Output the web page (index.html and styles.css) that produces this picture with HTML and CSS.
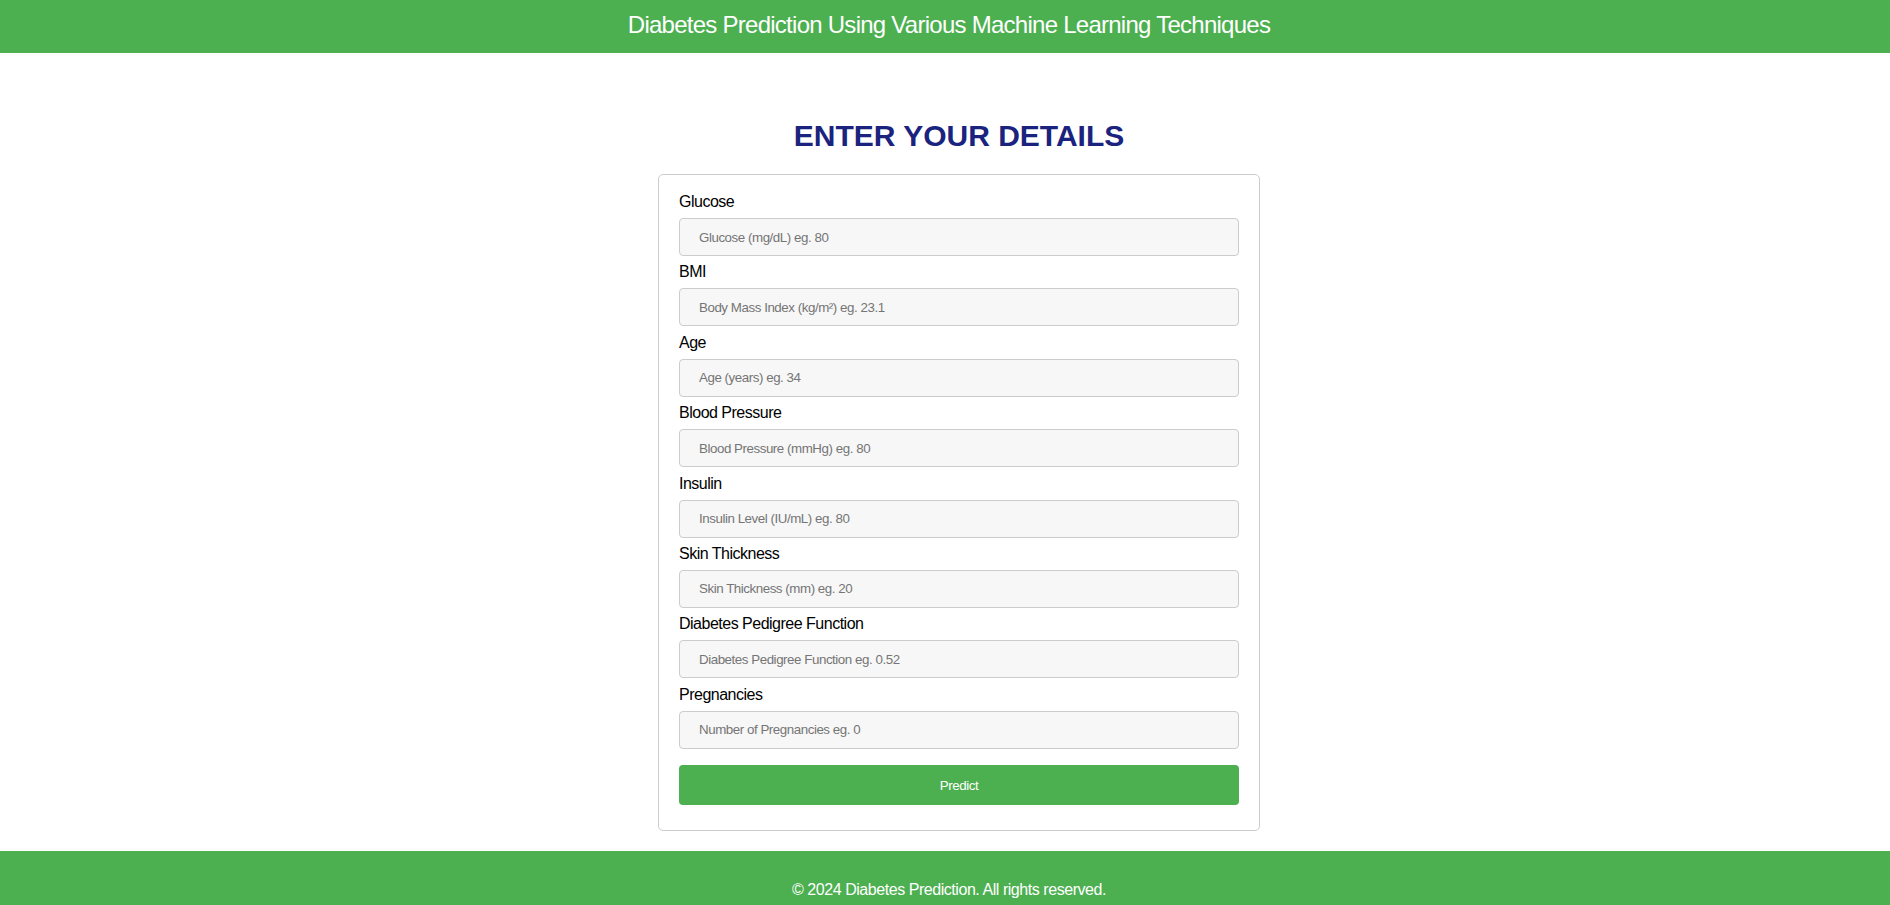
FILE: index.html
```html
<!DOCTYPE html>
<html lang="en">
<head>
<meta charset="utf-8">
<title>Diabetes Prediction</title>
<link rel="stylesheet" href="styles.css">
</head>
<body>
<header class="site-header">
  <h1 class="site-title">Diabetes Prediction Using Various Machine Learning Techniques</h1>
</header>
<main class="main">
  <h2 class="form-title">ENTER YOUR DETAILS</h2>
  <form class="card">
    <div class="field">
      <label for="glucose">Glucose</label>
      <input id="glucose" type="text" placeholder="Glucose (mg/dL) eg. 80">
    </div>
    <div class="field">
      <label for="bmi">BMI</label>
      <input id="bmi" type="text" placeholder="Body Mass Index (kg/m²) eg. 23.1">
    </div>
    <div class="field">
      <label for="age">Age</label>
      <input id="age" type="text" placeholder="Age (years) eg. 34">
    </div>
    <div class="field">
      <label for="bp">Blood Pressure</label>
      <input id="bp" type="text" placeholder="Blood Pressure (mmHg) eg. 80">
    </div>
    <div class="field">
      <label for="insulin">Insulin</label>
      <input id="insulin" type="text" placeholder="Insulin Level (IU/mL) eg. 80">
    </div>
    <div class="field">
      <label for="skin">Skin Thickness</label>
      <input id="skin" type="text" placeholder="Skin Thickness (mm) eg. 20">
    </div>
    <div class="field">
      <label for="dpf">Diabetes Pedigree Function</label>
      <input id="dpf" type="text" placeholder="Diabetes Pedigree Function eg. 0.52">
    </div>
    <div class="field">
      <label for="preg">Pregnancies</label>
      <input id="preg" type="text" placeholder="Number of Pregnancies eg. 0">
    </div>
    <button class="predict" type="button">Predict</button>
  </form>
</main>
<footer class="site-footer">
  <p class="copyright">© 2024 Diabetes Prediction. All rights reserved.</p>
</footer>
</body>
</html>
```

FILE: styles.css
```css
html, body {
  margin: 0;
  padding: 0;
  background: #ffffff;
  font-family: "Liberation Sans", Arial, sans-serif;
}

.site-header {
  background: #4caf50;
  height: 53px;
  padding-left: 8px;
}

.site-title {
  margin: 0;
  padding-top: 11px;
  font-size: 24px;
  line-height: 28px;
  font-weight: normal;
  color: #ffffff;
  text-align: center;
  letter-spacing: -0.74px;
}

.main {
  display: flex;
  flex-direction: column;
  align-items: center;
  padding: 66px 0 0 28px;
}

.form-title {
  margin: 0 0 21px;
  font-size: 30px;
  line-height: 34px;
  font-weight: bold;
  color: #1a237e;
}

.card {
  width: 560px;
  padding: 18px 20px 25px;
  border: 1px solid #cccccc;
  border-radius: 5px;
  display: flex;
  flex-direction: column;
}

.field {
  display: flex;
  flex-direction: column;
  gap: 7px;
  margin-bottom: 7.4px;
}

.field label {
  font-size: 16px;
  line-height: 18px;
  color: #000000;
  letter-spacing: -0.5px;
}

.field input {
  box-sizing: border-box;
  height: 38px;
  margin: 0;
  padding: 0 19px;
  border: 1px solid #cccccc;
  border-radius: 4px;
  background: #f7f7f7;
  font-family: "Liberation Sans", Arial, sans-serif;
  font-size: 13.33px;
  letter-spacing: -0.45px;
  color: #333333;
  outline: none;
}

.field input::placeholder {
  color: #757575;
}

.predict {
  margin-top: 9px;
  height: 40px;
  border: none;
  border-radius: 4px;
  background: #4caf50;
  color: #ffffff;
  font-family: "Liberation Sans", Arial, sans-serif;
  font-size: 13.33px;
  letter-spacing: -0.45px;
  cursor: pointer;
}

.site-footer {
  margin-top: 20px;
  background: #4caf50;
  padding: 30px 0 30px 8px;
  text-align: center;
  color: #ffffff;
}

.copyright {
  margin: 0;
  font-size: 16px;
  line-height: 18px;
  letter-spacing: -0.45px;
}
```
